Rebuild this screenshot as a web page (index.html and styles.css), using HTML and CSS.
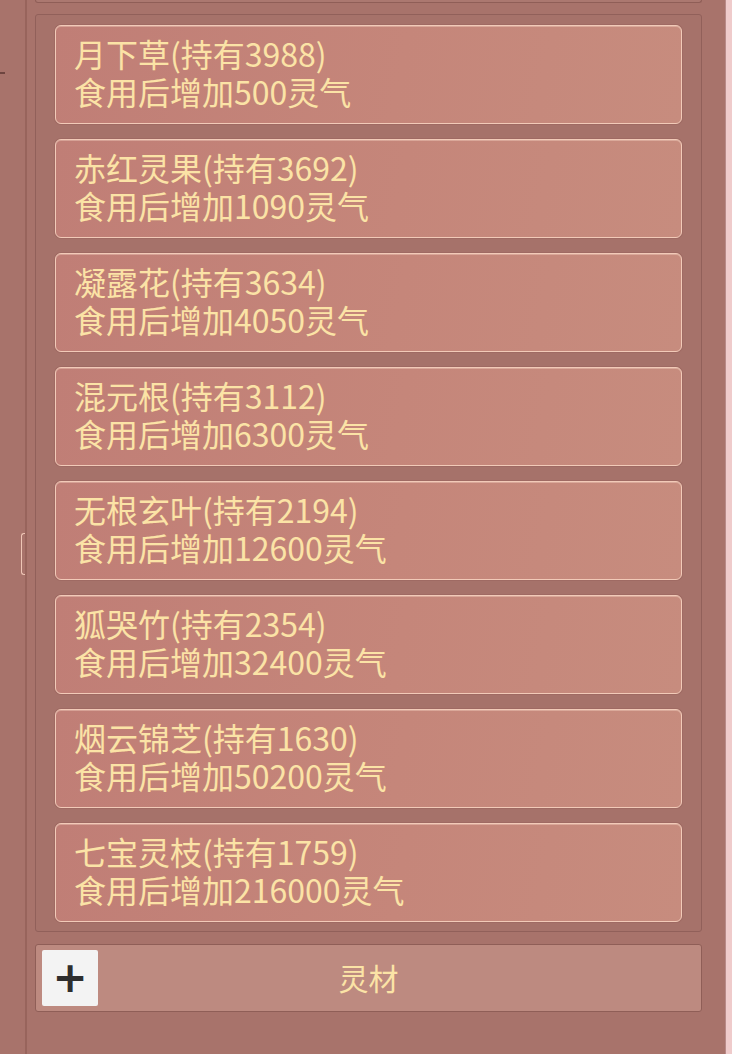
FILE: index.html
```html
<!DOCTYPE html>
<html>
  <head>
    <meta charset="utf-8" />
    <title>灵材</title>
    <link rel="stylesheet" href="styles.css">
  </head>
  <body>
    <div id="side">
      <span class="mark"></span>
      <span class="tab"></span>
    </div>
    <div id="panel">
      <div id="topbar"></div>
      <div id="list">
        <div class="item">
          <div>月下草(持有3988)</div>
          <div>食用后增加500灵气</div>
        </div>
        <div class="item">
          <div>赤红灵果(持有3692)</div>
          <div>食用后增加1090灵气</div>
        </div>
        <div class="item">
          <div>凝露花(持有3634)</div>
          <div>食用后增加4050灵气</div>
        </div>
        <div class="item">
          <div>混元根(持有3112)</div>
          <div>食用后增加6300灵气</div>
        </div>
        <div class="item">
          <div>无根玄叶(持有2194)</div>
          <div>食用后增加12600灵气</div>
        </div>
        <div class="item">
          <div>狐哭竹(持有2354)</div>
          <div>食用后增加32400灵气</div>
        </div>
        <div class="item">
          <div>烟云锦芝(持有1630)</div>
          <div>食用后增加50200灵气</div>
        </div>
        <div class="item">
          <div>七宝灵枝(持有1759)</div>
          <div>食用后增加216000灵气</div>
        </div>
      </div>
      <div id="tabbar">
        <button class="add">+</button>
        <span class="title">灵材</span>
      </div>
    </div>
    <div id="edge"></div>
  </body>
</html>
```

FILE: styles.css
```css
*{
  box-sizing: border-box;
  font-family: "Noto Sans CJK SC", "Noto Sans", sans-serif;
}
html, body{
  margin: 0;
  height: 100%;
}
body{
  display: flex;
  background-color: #a8736b;
  overflow: hidden;
}
#side{
  position: relative;
  width: 27px;
  border-right: 2px solid #98645c;
}
.mark{
  position: absolute;
  left: 0;
  top: 72px;
  width: 5px;
  height: 2px;
  background-color: #6e4540;
}
.tab{
  position: absolute;
  right: 0;
  top: 533px;
  width: 4px;
  height: 42px;
  border: 1px solid #efc6b6;
  border-right: none;
  border-radius: 3px 0 0 3px;
}
#panel{
  flex: 1;
  display: flex;
  flex-direction: column;
  padding: 0 23px 0 8px;
}
#topbar{
  height: 3px;
  border: 1px solid #8f5e57;
  border-top: none;
  border-radius: 0 0 4px 4px;
  background-color: #ab7870;
}
#list{
  margin-top: 11px;
  height: 918px;
  padding: 10px 19px 9px 19px;
  display: flex;
  flex-direction: column;
  gap: 15px;
  border: 1px solid #91605a;
  border-radius: 3px;
  background-color: #a6726a;
}
.item{
  height: 99px;
  padding: 8px 17px 0 18px;
  border: 1px solid #f2cab8;
  border-radius: 6px;
  background: linear-gradient(100deg, #c07e76 0%, #c5867a 55%, #c78c7e 100%);
  box-shadow: inset 0 1px 0 rgba(255, 225, 210, 0.35), 0 0 0 1px rgba(140, 85, 78, 0.25);
  color: #fbe3a6;
  font-size: 32px;
  line-height: 38px;
}
#tabbar{
  margin-top: 12px;
  height: 68px;
  position: relative;
  display: flex;
  align-items: center;
  justify-content: center;
  border: 1px solid #8f5e57;
  border-radius: 3px;
  background-color: #bd8a80;
}
.add{
  position: absolute;
  left: 6px;
  top: 5px;
  width: 56px;
  height: 56px;
  padding: 0;
  border: none;
  border-radius: 2px;
  background-color: #f3f3f3;
  color: #2e2e2e;
  font-size: 42px;
  font-weight: bold;
  line-height: 52px;
  font-family: "DejaVu Sans", sans-serif;
}
.title{
  color: #fbe3a6;
  font-size: 30px;
  margin-top: -3px;
}
#edge{
  width: 7px;
  border-left: 1px solid #b88a88;
  background-color: #efcbcb;
}
```
